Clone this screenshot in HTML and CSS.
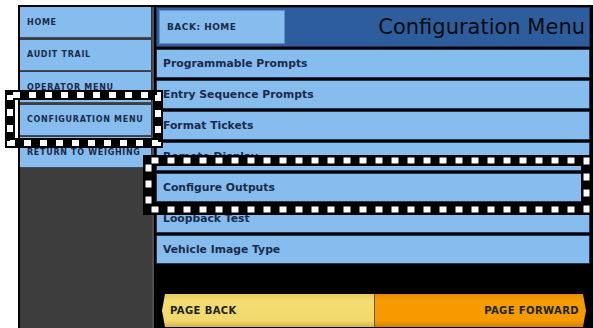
FILE: index.html
```html
<!DOCTYPE html>
<html>
<head>
<meta charset="utf-8">
<link rel="stylesheet" href="styles.css">
</head>
<body>
<div class="frame">
  <nav class="sidebar">
    <div class="nav-item">HOME</div>
    <div class="nav-item">AUDIT TRAIL</div>
    <div class="nav-item">OPERATOR MENU</div>
    <div class="nav-item">CONFIGURATION MENU</div>
    <div class="nav-item">RETURN TO WEIGHING</div>
  </nav>
  <main class="main">
    <header class="header">
      <div class="back">BACK: HOME</div>
      <h1 class="title">Configuration Menu</h1>
    </header>
    <div class="rows">
      <div class="row">Programmable Prompts</div>
      <div class="row">Entry Sequence Prompts</div>
      <div class="row">Format Tickets</div>
      <div class="row">Remote Display</div>
      <div class="row">Configure Outputs</div>
      <div class="row">Loopback Test</div>
      <div class="row">Vehicle Image Type</div>
    </div>
    <div class="pager">
      <div class="btn btn-back">PAGE BACK</div>
      <div class="btn btn-fwd">PAGE FORWARD</div>
    </div>
  </main>
</div>
<svg class="mark mark-nav" width="158" height="58" viewBox="0 0 158 58">
  <rect x="5" y="5" width="148" height="48" fill="none" stroke="#000" stroke-width="10"/>
  <rect x="5" y="5" width="148" height="48" fill="none" stroke="#fff" stroke-width="6" stroke-dasharray="7 9" stroke-dashoffset="-3"/>
</svg>
<svg class="mark mark-row" width="449" height="60" viewBox="0 0 449 60">
  <rect x="5.5" y="5.5" width="438" height="49" fill="none" stroke="#000" stroke-width="11"/>
  <rect x="5.5" y="5.5" width="438" height="49" fill="none" stroke="#fff" stroke-width="6" stroke-dasharray="7 9" stroke-dashoffset="-3"/>
</svg>
</body>
</html>
```
FILE: styles.css
```css
html, body {
  margin: 0;
  padding: 0;
  background: #fff;
}
body {
  font-family: "DejaVu Sans", Verdana, sans-serif;
  width: 593px;
  height: 328px;
  overflow: hidden;
  position: relative;
}
.frame {
  margin: 5px 0 0 18px;
  width: 575px;
  height: 323px;
  box-sizing: border-box;
  background: #000;
  padding: 2px 3px 0 2px;
  display: flex;
}
.sidebar {
  width: 132px;
  background: #3d3d3d;
  border-right: 2px solid #4e4e4e;
  display: flex;
  flex-direction: column;
  gap: 2.5px;
}
.nav-item {
  height: 30px;
  background: #86bcee;
  border-right: 1px solid #26384f;
  display: flex;
  align-items: center;
  padding-left: 7px;
  font-size: 8px;
  letter-spacing: 0.7px;
  font-weight: bold;
  color: #1b2b4b;
  white-space: nowrap;
  box-shadow: 0 1px 0 #3c4a5a;
}
.main {
  flex: 1;
  margin-left: 2px;
  display: flex;
  flex-direction: column;
}
.header {
  height: 40px;
  box-sizing: border-box;
  background: #2d5d9d;
  border: 1px solid #1d3358;
  padding: 2px;
  display: flex;
  align-items: stretch;
  justify-content: space-between;
}
.back {
  width: 126px;
  box-sizing: border-box;
  background: #86bcee;
  border: 1px solid #5f8fc4;
  display: flex;
  align-items: center;
  padding-left: 7px;
  font-size: 9px;
  letter-spacing: 0.5px;
  font-weight: bold;
  color: #1b2b4b;
}
.title {
  margin: 0;
  padding-right: 2px;
  font-size: 21px;
  font-weight: normal;
  color: #0c0c0c;
  display: flex;
  align-items: center;
}
.rows {
  margin-top: 2px;
  display: flex;
  flex-direction: column;
  gap: 2px;
}
.row {
  height: 29px;
  box-sizing: border-box;
  background: #86bcee;
  border: 1px solid #22344e;
  display: flex;
  align-items: center;
  padding-left: 6px;
  font-size: 10.8px;
  font-weight: bold;
  color: #1b2b4b;
}
.pager {
  margin-top: 30px;
  padding: 0 4px 0 6px;
  display: flex;
  height: 33px;
}
.btn {
  flex: 1;
  display: flex;
  align-items: center;
  font-size: 10px;
  font-weight: bold;
  color: #17251a;
  letter-spacing: 0.4px;
}
.btn-back {
  background: linear-gradient(#e9c85a, #f4dc72 20%, #f2d96e 80%, #d9b44a);
  clip-path: polygon(3px 0, 100% 0, 100% 100%, 3px 100%, 0 50%);
  padding-left: 8px;
  border-right: 1px solid #6b5416;
}
.btn-fwd {
  background: linear-gradient(#e58a00, #f59c00 20%, #f59a00 80%, #d87f00);
  clip-path: polygon(0 0, calc(100% - 3px) 0, 100% 50%, calc(100% - 3px) 100%, 0 100%);
  justify-content: flex-end;
  padding-right: 7px;
}
.mark {
  position: absolute;
  display: block;
}
.mark-nav {
  left: 5px;
  top: 90px;
}
.mark-row {
  left: 143px;
  top: 155px;
}
```
